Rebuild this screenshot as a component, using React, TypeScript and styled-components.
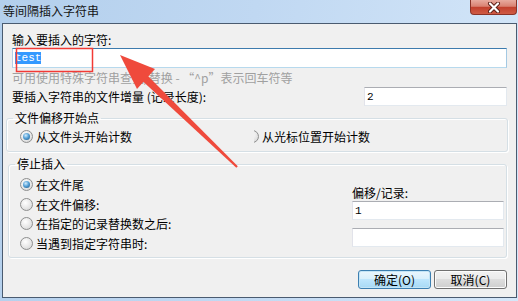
import React from "react";
import styled, { createGlobalStyle } from "styled-components";

const GlobalStyle = createGlobalStyle`
  html, body {
    margin: 0;
    padding: 0;
    overflow: hidden;
  }
  body {
    font-family: "Noto Sans CJK SC", "Noto Sans", sans-serif;
    font-size: 12px;
    color: #000;
  }
`;

const Window = styled.div`
  position: relative;
  width: 518px;
  height: 301px;
  display: flex;
  flex-direction: column;
  background: linear-gradient(100deg, #b3cfec 0%, #c0d8f2 45%, #d5e7f9 100%);
`;

const TitleBar = styled.div`
  flex: none;
  height: 23px;
  display: flex;
  justify-content: space-between;
  align-items: flex-start;
`;

const Title = styled.div`
  margin: 3px 0 0 3px;
  line-height: 16px;
  color: #151515;
`;

const CloseButton = styled.div`
  box-sizing: border-box;
  width: 47px;
  height: 15px;
  margin-right: 1px;
  border: 1px solid #8a3328;
  border-top: none;
  border-radius: 0 0 4px 4px;
  background: linear-gradient(#e8ab9f 0%, #d98272 45%, #c2402d 52%, #cf5b45 100%);
  display: flex;
  align-items: center;
  justify-content: center;
`;

const Client = styled.div`
  flex: 1;
  min-height: 0;
  margin: 0 1px 3px 2px;
  border: 1px solid #4a5b70;
  background: #f0f0f0;
  display: flex;
  flex-direction: column;
`;

const TopSection = styled.div`
  padding: 8px 9px 0 9px;
  display: flex;
  flex-direction: column;
`;

const Label = styled.div`
  line-height: 16px;
  white-space: nowrap;
`;

const Hint = styled(Label)`
  margin-top: 2px;
  color: #a0a0a0;
`;

const Wide = styled.span`
  font-feature-settings: "fwid";
`;

const TextBox = styled.div<{ $focused?: boolean; $height?: number; $width?: number }>`
  box-sizing: border-box;
  height: ${(p) => p.$height ?? 19}px;
  width: ${(p) => (p.$width ? `${p.$width}px` : "auto")};
  border: 1px solid;
  border-color: ${(p) =>
    p.$focused ? "#3d7bad #a4c9e3 #b7d9ed #b5cfe7" : "#abadb3 #e3e9ef #e3e9ef #e2e3ea"};
  background: #fff;
  display: flex;
  align-items: center;
  padding-left: 2px;
  font-family: "Liberation Mono", monospace;
  font-size: 11px;
`;

const Selected = styled.span`
  background: #3399ff;
  color: #fff;
  line-height: 12px;
`;

const IncrementRow = styled.div`
  margin-top: 1px;
  height: 19px;
  display: flex;
  align-items: center;
  justify-content: space-between;
`;

const Group = styled.fieldset<{ $ml: number; $mr: number }>`
  margin: 4px ${(p) => p.$mr}px 0 ${(p) => p.$ml}px;
  padding: 0;
  min-width: 0;
  border: 1px solid #d5dfe5;
  border-radius: 3px;
  box-shadow: inset 1px 1px 0 #fff, 1px 1px 0 #fff;
`;

const Legend = styled.legend`
  margin-left: 6px;
  padding: 0 2px;
  line-height: 16px;
`;

const OffsetRow = styled.div`
  display: grid;
  grid-template-columns: 234px auto;
  padding: 2px 0 7px 13px;
`;

const RadioLabel = styled.div<{ $height?: number }>`
  display: flex;
  align-items: center;
  gap: 3px;
  height: ${(p) => p.$height ?? 16}px;
  white-space: nowrap;
`;

const Radio = styled.span<{ $checked?: boolean }>`
  box-sizing: border-box;
  flex: none;
  width: 13px;
  height: 13px;
  border-radius: 50%;
  border: 1px solid #8e8f8f;
  background: radial-gradient(circle at 40% 35%, #ffffff 0%, #e4e4e4 60%, #cdcdcd 100%);
  display: inline-flex;
  align-items: center;
  justify-content: center;
  &::after {
    content: "";
    display: ${(p) => (p.$checked ? "block" : "none")};
    width: 7px;
    height: 7px;
    border-radius: 50%;
    background: radial-gradient(circle at 40% 35%, #d4ecfc 0%, #56a2d8 45%, #18507e 100%);
  }
`;

const ClippedRadio = styled.span`
  display: inline-flex;
  width: 5px;
  height: 13px;
  overflow: hidden;
  justify-content: flex-end;
  flex: none;
`;

const StopBody = styled.div`
  display: flex;
  justify-content: space-between;
  padding: 3px 2px 4px 11px;
`;

const RadioColumn = styled.div`
  display: flex;
  flex-direction: column;
`;

const OffsetColumn = styled.div`
  width: 152px;
  margin-top: 10px;
  display: flex;
  flex-direction: column;
  gap: 8px;
`;

const OffsetField = styled.div`
  display: flex;
  flex-direction: column;
`;

const ButtonRow = styled.div`
  margin-top: 12px;
  padding-right: 9px;
  display: flex;
  justify-content: flex-end;
  gap: 3px;
`;

const Button = styled.div<{ $default?: boolean }>`
  box-sizing: border-box;
  width: 73px;
  height: 19px;
  border: 1px solid ${(p) => (p.$default ? "#3c7fb1" : "#707070")};
  border-radius: 3px;
  background: ${(p) =>
    p.$default
      ? "linear-gradient(#eaf6fd 0%, #d9f0fc 45%, #bee6fd 50%, #a7d9f5 100%)"
      : "linear-gradient(#f2f2f2 0%, #ebebeb 45%, #dddddd 50%, #cfcfcf 100%)"};
  box-shadow: inset 0 0 0 1px ${(p) => (p.$default ? "#c4e5f6" : "#fcfcfc")};
  display: flex;
  align-items: center;
  justify-content: center;
  line-height: 16px;
`;

const Overlay = styled.svg`
  position: absolute;
  left: 0;
  top: 0;
  pointer-events: none;
`;

const stopOptions = [
  { text: "在文件尾", checked: true },
  { text: "在文件偏移:" },
  { text: "在指定的记录替换数之后:" },
  { text: "当遇到指定字符串时:" },
];

export default function App() {
  return (
    <>
      <GlobalStyle />
      <Window lang="zh-CN">
        <TitleBar>
          <Title>等间隔插入字符串</Title>
          <CloseButton>
            <svg width="14" height="11" viewBox="0 0 14 11">
              <path d="M3 1.5 L11 9.5 M11 1.5 L3 9.5" stroke="#5a1e16" strokeWidth="4" strokeLinecap="round" />
              <path d="M3 1.5 L11 9.5 M11 1.5 L3 9.5" stroke="#ffffff" strokeWidth="2.2" strokeLinecap="round" />
            </svg>
          </CloseButton>
        </TitleBar>
        <Client>
          <TopSection>
            <Label>输入要插入的字符:</Label>
            <TextBox $focused $height={20}>
              <Selected>test</Selected>
            </TextBox>
            <Hint>
              可用使用特殊字符串查找/替换 - <Wide>“</Wide>^p<Wide>”</Wide>表示回车符等
            </Hint>
            <IncrementRow>
              <Label>要插入字符串的文件增量 (记录长度):</Label>
              <TextBox $width={143}>2</TextBox>
            </IncrementRow>
          </TopSection>

          <Group $ml={3} $mr={8}>
            <Legend>文件偏移开始点</Legend>
            <OffsetRow>
              <RadioLabel>
                <Radio $checked />
                从文件头开始计数
              </RadioLabel>
              <RadioLabel>
                <ClippedRadio>
                  <Radio />
                </ClippedRadio>
                从光标位置开始计数
              </RadioLabel>
            </OffsetRow>
          </Group>

          <Group $ml={5} $mr={9}>
            <Legend>停止插入</Legend>
            <StopBody>
              <RadioColumn>
                {stopOptions.map((o) => (
                  <RadioLabel key={o.text} $height={19.5}>
                    <Radio $checked={o.checked} />
                    {o.text}
                  </RadioLabel>
                ))}
              </RadioColumn>
              <OffsetColumn>
                <OffsetField>
                  <Label>偏移/记录:</Label>
                  <TextBox>1</TextBox>
                </OffsetField>
                <TextBox />
              </OffsetColumn>
            </StopBody>
          </Group>

          <ButtonRow>
            <Button $default>确定(O)</Button>
            <Button>取消(C)</Button>
          </ButtonRow>
        </Client>

        <Overlay width="518" height="301" viewBox="0 0 518 301">
          <rect x="16.5" y="48.5" width="76" height="23" fill="none" stroke="#f23a35" strokeWidth="1.5" />
          <polygon points="120,55 155,69 137,89" fill="#ef4a3c" />
          <polygon points="142.5,81 148,76 237.8,166.3 236.3,167.8" fill="#ef4a3c" />
        </Overlay>
      </Window>
    </>
  );
}
